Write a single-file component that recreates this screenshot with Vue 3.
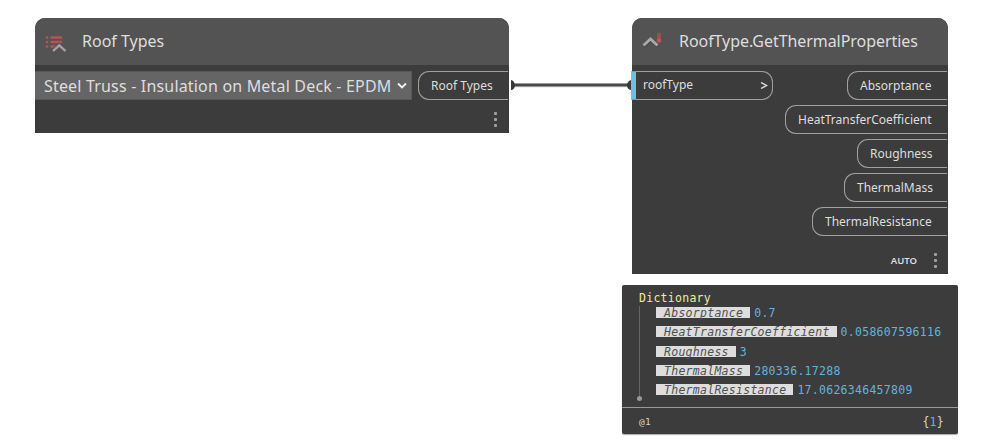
<script setup>
const outputs = [
  { name: 'Absorptance', width: 100 },
  { name: 'HeatTransferCoefficient', width: 162 },
  { name: 'Roughness', width: 90 },
  { name: 'ThermalMass', width: 103 },
  { name: 'ThermalResistance', width: 135 },
]
const entries = [
  ['Absorptance', '0.7'],
  ['HeatTransferCoefficient', '0.058607596116'],
  ['Roughness', '3'],
  ['ThermalMass', '280336.17288'],
  ['ThermalResistance', '17.0626346457809'],
]
</script>

<template>
  <main class="canvas">
    <svg class="wire" width="124" height="14" viewBox="0 0 124 14">
      <path d="M2 7.500H122" stroke="#b5b5b5" stroke-width="4" opacity=".35" />
      <path d="M2 7H122" stroke="#484848" stroke-width="2.800" />
      <path d="M2 2C4 2 6 5 6 7.500S4 12 2 12ZM122.500 2C120 2 118 5 118 7.500S120 12 122.500 12Z" fill="#383838" />
    </svg>

    <section class="node source">
      <header>
        <svg class="icon list-icon" width="24" height="20" viewBox="0 0 24 20">
          <g stroke="#b95353" stroke-width="2.700" stroke-linecap="round">
            <path d="M3 3.500h.1M7.500 3.500h9.500M3 8h.1M7.500 8h9.500M3 12.500h.1M7.500 12.500h4" />
          </g>
          <path d="M9 17.500L15.300 11.500L21.500 17.500" fill="none" stroke="#555" stroke-width="5" />
          <path d="M9 17L15.300 11.300L21.500 17" fill="none" stroke="#a4a4a4" stroke-width="2.300" />
        </svg>
        <h1>Roof Types</h1>
      </header>
      <div class="ports">
        <div class="select">
          <span>Steel Truss - Insulation on Metal Deck - EPDM</span>
          <svg width="12" height="8" viewBox="0 0 12 8"><path d="M2 1.500L6 5.500L10 1.500" fill="none" stroke="#f2f2f2" stroke-width="1.800" /></svg>
        </div>
        <div class="port out source-port"><span>Roof Types</span></div>
      </div>
      <footer><i class="dots"><b /><b /><b /></i></footer>
    </section>

    <section class="node target">
      <header>
        <svg class="icon" width="24" height="20" viewBox="0 0 24 20">
          <path d="M4 16.500L11 10L18 16.500" fill="none" stroke="#414141" stroke-width="3" />
          <path d="M3.500 15.500L10.500 9L17.500 15.500" fill="none" stroke="#a9a9a9" stroke-width="2.800" />
          <path d="M19 4.500V10" stroke="#a04c4e" stroke-width="4" stroke-linecap="round" />
          <circle cx="19" cy="10.500" r="2.300" fill="#c75050" />
        </svg>
        <h1>RoofType.GetThermalProperties</h1>
      </header>
      <div class="ports">
        <div class="port in"><span>roofType</span><svg width="8" height="10" viewBox="0 0 8 10"><path d="M1 1.500L6.500 4.500L1 7.500" fill="none" stroke="#e4e4e4" stroke-width="1.400" /></svg></div>
        <div class="outs">
          <div v-for="o in outputs" :key="o.name" class="port out" :style="{ width: o.width + 'px' }"><span>{{ o.name }}</span></div>
        </div>
      </div>
      <footer><em>AUTO</em><i class="dots"><b /><b /><b /></i></footer>
    </section>

    <section class="preview">
      <div class="tree">
        <div class="kind">Dictionary</div>
        <div class="entries">
          <div v-for="[key, value] in entries" :key="key" class="entry"><span class="key">{{ key }}</span><span class="value">{{ value }}</span></div>
        </div>
      </div>
      <div class="summary"><span class="level">@1</span><span>{<b>1</b>}</span></div>
    </section>
  </main>
</template>

<style>
body { background: #fff; }
</style>

<style scoped>
* { box-sizing: border-box; }
.canvas { position: relative; width: 984px; height: 444px; overflow: hidden; font-family: "Noto Sans", sans-serif; color: #dedede; }
.wire { position: absolute; left: 509px; top: 78px; }
.node { position: absolute; top: 18px; background: #3c3c3c; border-radius: 10px 10px 0 0; display: flex; flex-direction: column; }
.source { left: 35px; width: 474px; height: 115px; }
.target { left: 632px; width: 316px; height: 256px; }
header { height: 47px; background: #535353; border-radius: 10px 10px 0 0; display: flex; align-items: center; padding: 0 0 2px 9px; flex: none; }
.icon { flex: none; margin-top: 6px; }
.target .icon { margin-top: -2px; }
h1 { margin: 0 0 0 14px; font-size: 16px; line-height: 24px; font-weight: 400; white-space: nowrap; }
.target header { padding-left: 8px; }
.target h1 { margin-left: 15px; letter-spacing: -.06px; }
.ports { display: flex; justify-content: space-between; padding: 6px 1px 0 0; }
.select { width: 377px; height: 29px; border: 1px solid #585858; border-left: 0; background: #656565; display: flex; align-items: center; padding-left: 9px; font-size: 16px; white-space: nowrap; }
.select span { flex: none; width: 352px; letter-spacing: .18px; }
.port { height: 29px; border: 1px solid #a0a0a0; display: flex; align-items: center; font-size: 12px; white-space: nowrap; }
.out { border-right: 0; border-radius: 11px 0 0 11px; padding-left: 12px; }
.source-port { width: 90px; }
.in { width: 142px; margin-left: -1px; border-left: 5px solid #6ac0e7; border-radius: 0 11px 11px 0; padding: 0 4px 2px 7px; justify-content: space-between; }
.in svg { margin-top: 3px; }
.outs { display: flex; flex-direction: column; align-items: flex-end; gap: 5px; }
footer { margin-top: auto; display: flex; justify-content: flex-end; align-items: center; height: 27px; padding-right: 12px; }
.target footer { padding-right: 11px; }
footer em { font-size: 9.500px; line-height: 12px; font-style: normal; font-weight: 600; margin: 1px 17px 0 0; }
.dots { display: flex; flex-direction: column; gap: 3px; }
.dots b { width: 3px; height: 3px; border-radius: 1px; background: #a0a0a0; }
.preview { position: absolute; left: 622px; top: 285px; width: 336px; height: 149px; background: #3c3c3c; border-radius: 2px; box-shadow: 0 1px 1px #aaa; font: 11.500px/14px "DejaVu Sans Mono", monospace; letter-spacing: .276px; color: #d4d4d4; display: flex; flex-direction: column; }
.tree { height: 123px; padding: 6px 0 0 17px; border-bottom: 1px solid #999; }
.kind { color: #eded9c; height: 15px; }
.entries { position: relative; border-left: 1px solid #666; height: 93px; padding: 0 0 0 16px; }
.entries::after { content: ""; position: absolute; left: -3px; bottom: -2px; width: 5px; height: 5px; border-radius: 50%; background: #999; }
.entry { display: flex; height: 19.250px; align-items: flex-start; }
.key { height: 11px; margin-top: 1px; padding: 0 7px 0 8px; line-height: 12px; background: #ddd; color: #505050; font-style: italic; }
.value { margin: 0 0 0 4px; color: #61b4dc; }
.summary { height: 26px; display: flex; align-items: center; justify-content: space-between; padding: 2px 14px 0 17px; }
.summary b { color: #61b4dc; font-weight: 400; }
.level { font-size: 9.500px; }
</style>
